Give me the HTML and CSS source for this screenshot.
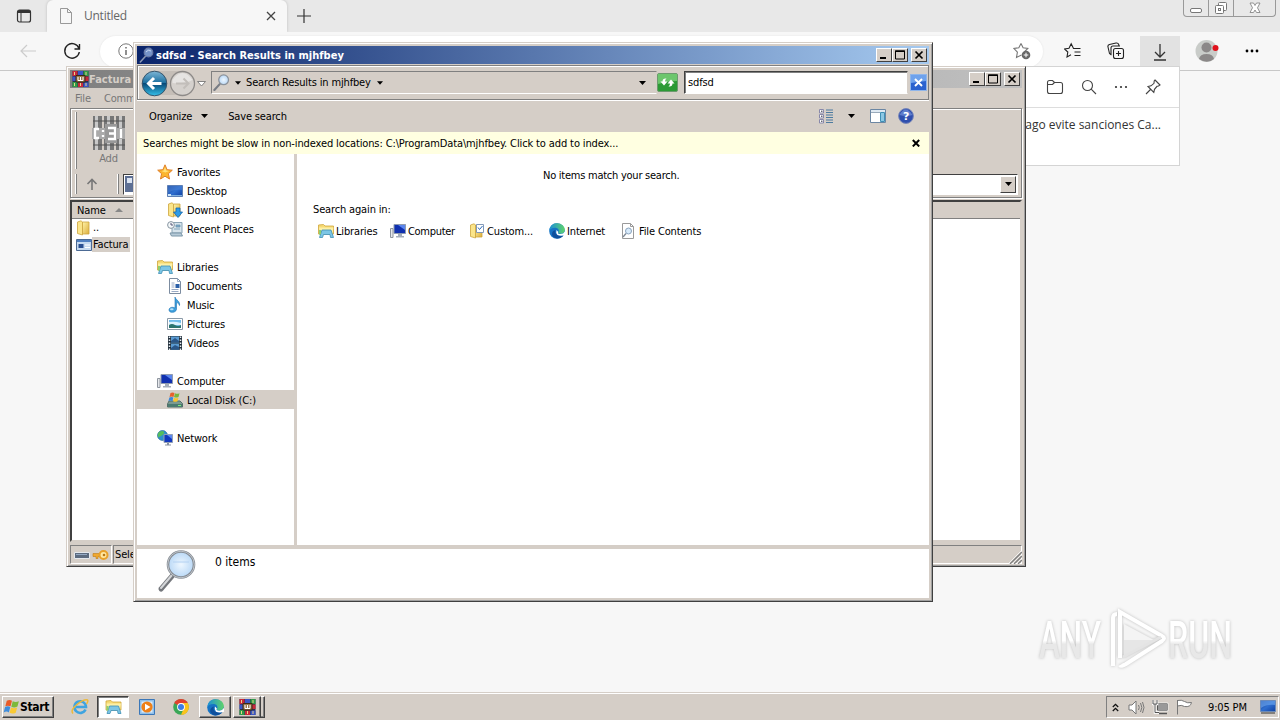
FILE: index.html
```html
<!DOCTYPE html>
<html lang="en">
<head>
  <meta charset="UTF-8">
  <title>Search Results</title>
  <link rel="stylesheet" href="styles.css">
</head>
<body>

<!-- shared icons -->
<svg class="sprite" xmlns="http://www.w3.org/2000/svg">
  <defs>
    <linearGradient id="gFolder" x1="0" y1="0" x2="1" y2="1"><stop offset="0" stop-color="#fff3a8"/><stop offset="1" stop-color="#dcae3c"/></linearGradient>
    <linearGradient id="gScreen" x1="0" y1="0" x2="1" y2="1"><stop offset="0" stop-color="#173a8c"/><stop offset=".5" stop-color="#2f6fd0"/><stop offset="1" stop-color="#0f3fa0"/></linearGradient>
    <linearGradient id="gBlue" x1="0" y1="0" x2="0" y2="1"><stop offset="0" stop-color="#7db6d6"/><stop offset=".48" stop-color="#1b6f9f"/><stop offset=".5" stop-color="#084a78"/><stop offset="1" stop-color="#35c0ea"/></linearGradient>
    <linearGradient id="gEdge" x1="0" y1="0" x2="1" y2="0"><stop offset="0" stop-color="#1b8fd8"/><stop offset="1" stop-color="#5ed36a"/></linearGradient>
    <radialGradient id="gLens"><stop offset="0" stop-color="#eef7ff"/><stop offset="1" stop-color="#b9d8f6"/></radialGradient>
    <symbol id="star" viewBox="0 0 16 16"><path d="M8 .8l2.100 4.900 5.200.5-3.900 3.500 1.100 5.300L8 12.200 3.500 15l1.100-5.300L.7 6.200l5.200-.5z" fill="#fbb52f" stroke="#e0802a"/><path d="M8 3l1.300 3.500 3 .5-4 1.500-4-1.500 2.400-.6z" fill="#ffe07a"/></symbol>
    <symbol id="desktop" viewBox="0 0 16 16"><path d="M.5 2.500h15v11H.5z" fill="url(#gScreen)" stroke="#5d7fb4"/><path d="M1 3h14v4Q7 6 1 10z" fill="#4b83d6" opacity=".55"/><path d="M1 12h14v1H1z" fill="#7fb0e0"/><path d="M1 11h3v2H1z" fill="#cfe6fa"/></symbol>
    <symbol id="folder" viewBox="0 0 16 16"><path d="M1.500 2L5 .8l1.500 1.200v13L1.500 13.500z" fill="#fbe58a" stroke="#cda43e" stroke-width=".8"/><path d="M6.500 2H13v12H6.500z" fill="url(#gFolder)" stroke="#cda43e" stroke-width=".8"/></symbol>
    <symbol id="downloads" viewBox="0 0 16 16"><use href="#folder"/><path d="M9 6h4v4h2.500L11 15.500 6.500 10H9z" fill="#2e9be6" stroke="#1767ad" stroke-width=".8"/></symbol>
    <symbol id="recent" viewBox="0 0 16 16"><path d="M5 1.500h10V12H5z" fill="#d7e4ec" stroke="#8aa4b5"/><path d="M3 12h11l1.500 3h-11z" fill="#b7cbd8" stroke="#7b96a8"/><path d="M9 4h4v2H9zM7 8h6" fill="#7ba8c8" stroke="#6d95b0" stroke-width=".8"/><circle cx="4" cy="4" r="3.400" fill="#f4f8fa" stroke="#8795a0"/><path d="M4 2v2h2" fill="none" stroke="#557"/></symbol>
    <symbol id="libraries" viewBox="0 0 16 16"><path d="M.5 2l5-.5L7 3h8.500v8H.5z" fill="#f6da74" stroke="#cfa63c" stroke-width=".8"/><path d="M1 4.500h14.500l-1 6H2z" fill="#fdf0a6"/><path d="M4 7h9l2.500 7.500h-3l-.5-3H5.500l-1 3h-3z" fill="#7cc6e6" stroke="#3f8fb5" stroke-width=".8"/><path d="M1 7v5l2-1V7z" fill="#8ecf70"/></symbol>
    <symbol id="documents" viewBox="0 0 16 16"><path d="M2.500.5h8l3 3v12h-11z" fill="#fff" stroke="#7c8ca0"/><path d="M10.500.5v3h3M4.500 5h3M4.500 7h3M4.500 9h3M4.500 11.500h7M4.500 13.500h7" fill="none" stroke="#7d93b5" stroke-width=".8"/><path d="M8.500 6h4v4h-4z" fill="#2b5fa8"/></symbol>
    <symbol id="music" viewBox="0 0 16 16"><path d="M8 0c.5 3 5.500 4 4.500 8.500C12 6 9.800 5.600 9.500 5.600V12c0 4-7.500 4.500-7.500 1 0-2.600 3.500-3.500 6-2z" fill="#3e9fdc" stroke="#1c74b5" stroke-width=".6"/><ellipse cx="4.800" cy="12.200" rx="1.800" ry="1" fill="#b6e1fa"/></symbol>
    <symbol id="pictures" viewBox="0 0 16 16"><path d="M.5 2.500h15v11H.5z" fill="#fff" stroke="#8b9aa8"/><path d="M2 4h12v8H2z" fill="#6fbcec"/><path d="M2 6q6-1 12 1v2H2z" fill="#d9f1ff"/><path d="M2 9q3-2 6 0t6 0v3H2z" fill="#2b746f"/></symbol>
    <symbol id="videos" viewBox="0 0 16 16"><path d="M1 1h14v14H1z" fill="#23303c"/><path d="M4 1.500h8v6H4zM4 8.500h8v6H4z" fill="#5b9bd2"/><path d="M4 6l4-3 4 3v1.500H4zM4 13l4-3 4 2v2.500H4z" fill="#2a5688"/><path d="M2.500 1.500v14M13.500 1.500v14" stroke="#e8eef4" stroke-width="1.500" stroke-dasharray="1.500 1.500"/></symbol>
    <symbol id="computer" viewBox="0 0 16 16"><path d="M4 1.500h11.500v9H4z" fill="#1030b0" stroke="#8f9bb0"/><path d="M8 2l7 0v5z" fill="#5b86ee"/><path d="M8 11h4v2H8zM6 13h8v1.500H6z" fill="#a4adba"/><path d="M.5 5.500h2.500v9H.5z" fill="#e6e8ec" stroke="#8e959e"/></symbol>
    <symbol id="disk" viewBox="0 0 16 16"><path d="M2 9h11l2.500 2.500v3.500h-15v-3z" fill="#7b9a90" stroke="#536f69"/><path d="M1 12h14v3H1z" fill="#4b7a70"/><path d="M11 13.500h3" stroke="#7df07d"/><path d="M3.500 1q2-1.200 4 0L6.500 5q-2-1-4 0z" fill="#e8602c"/><path d="M8 1.300q2 1 4.500 0L11.500 5q-2.500 1-4.500 0z" fill="#79b63c"/><path d="M2.400 5.500q2-1 4 0l-1 3.500q-2-1-4 0z" fill="#3b87d8"/><path d="M7 5.700q2 1 4.500 0l-1 3.500q-2.500 1-4.500 0z" fill="#f8c52e"/></symbol>
    <symbol id="network" viewBox="0 0 16 16"><circle cx="5.500" cy="5.500" r="5" fill="#2f8fd0" stroke="#1d5f96" stroke-width=".6"/><path d="M2 2q4-2 5 0T4 6 2 8Q-.5 5 2 2zM7 6l3-2v4z" fill="#55bd5d"/><path d="M7 4.500h8.500v8H7z" fill="#1238c0" stroke="#93a0b5"/><path d="M10 5h5v4z" fill="#5c88f0"/><path d="M10 13h2v1.500h2v1H8v-1h2z" fill="#8892a0"/></symbol>
    <symbol id="custom" viewBox="0 0 16 16"><use href="#folder"/><path d="M7.500 1.500h7v8h-7z" fill="#fff" stroke="#8299b8"/><path d="M9 4.500l1.500 2L13.500 3" fill="none" stroke="#2a68b8"/></symbol>
    <symbol id="edge" viewBox="0 0 16 16"><circle cx="8" cy="8" r="7.800" fill="#1673c4"/><path d="M.3 7C1.200 2 4.500.2 8 .2c4.500 0 7.800 3 7.800 6.600 0 2.600-2 4-4.300 4-1.800 0-2.500-.8-2-1.700C10.500 7 9 4.800 6 4.800 3 4.800.8 6.300.3 8z" fill="url(#gEdge)"/><path d="M6.300 8c-.8 3.500 2.700 5.500 8.200 4.500-3 3.500-8.500 4-11 .5C2 10 4 7.500 6.500 7z" fill="#0e4f9c"/><path d="M9.300 9q-1.300 2 2.200 2 2.800 0 4.500-2.500v3.500Q12 13.500 8.500 12 6.500 10 7.500 7z" fill="#fff"/></symbol>
    <symbol id="filesearch" viewBox="0 0 16 16"><path d="M2.500.5h8l3 3v12h-11z" fill="#fff" stroke="#9a9a9a"/><path d="M10.500.5v3h3" fill="none" stroke="#9a9a9a"/><circle cx="8.500" cy="8" r="3" fill="#d8ebfb" stroke="#8aa3bd"/><path d="M6 10.500L3 14" stroke="#7c8794" stroke-width="1.300"/></symbol>
    <symbol id="lens" viewBox="0 0 16 16"><path d="M6.300 9.500L1.300 15" stroke="#777c84" stroke-width="2" stroke-linecap="round"/><circle cx="10" cy="5.500" r="4.600" fill="url(#gLens)" stroke="#8b929b" stroke-width="1.200"/></symbol>
    <symbol id="lensdark" viewBox="0 0 16 16"><path d="M6.300 9.500L1.300 15" stroke="#8f9bb5" stroke-width="1.500" stroke-linecap="round"/><circle cx="9.500" cy="5.500" r="4.300" fill="#7593c8" stroke="#6a7ba6" stroke-width="1.200"/><path d="M7 5q2-3 5-1" fill="none" stroke="#c5d6f2"/></symbol>
    <symbol id="winrar" viewBox="0 0 16 16"><path d="M0 0h16v16H0z" fill="#28304a"/><path d="M0 0h5v5H0zM5.500 11.500h5V16h-5z" fill="#c8283a"/><path d="M5.500 0h5v4h-5zM0 5.500h4V10H0zM11 11.500h5V16h-5z" fill="#3b55c4"/><path d="M11 0h5v5h-5zM0 11h5v5H0z" fill="#2f9a48"/><path d="M12 5.500h4V10h-4z" fill="#c8283a"/><path d="M3.500 4.500h9v6.500h-9z" fill="#9a7a50" stroke="#3b2a14"/><path d="M5.500 6v3.500h5V6M8 6v3.500" fill="none" stroke="#fff"/><path d="M2 1v3M13.500 1v3M2 12v3M8 12v3M13.500 12v3" stroke="#e6d58a" stroke-width="1"/></symbol>
    <symbol id="flagwin" viewBox="0 0 18 16"><path d="M4 1.500q3-1.800 5.500 0L8 7.300q-3-1.500-5.500 0z" fill="#ea5b28"/><path d="M10.300 2q3 1.600 6.500 0l-1.500 5.500q-3.500 1.800-6.500.2z" fill="#7db93a"/><path d="M2.200 8q3-1.500 5.500 0L6.200 13.700q-2.500-1.700-5.500 0z" fill="#3f8ddc"/><path d="M8.500 8.500q3 1.600 6.500 0L13.500 14q-3.500 1.800-6.500.2z" fill="#f9c934"/></symbol>
    <symbol id="down" viewBox="0 0 7 4"><path d="M0 0h7L3.500 4z"/></symbol>
    <symbol id="min" viewBox="0 0 12 10"><path d="M2 7h6v2H2z"/></symbol>
    <symbol id="max" viewBox="0 0 12 10"><path d="M1.500 1h9v8h-9z" fill="none" stroke="#000"/><path d="M1 .5h10v1.500H1z"/></symbol>
    <symbol id="close" viewBox="0 0 12 10"><path d="M2.500 1.500l7 7M9.500 1.500l-7 7" stroke="#000" stroke-width="1.700"/></symbol>
  </defs>
</svg>

<div class="screen">

  <!-- browser behind -->
  <div class="browser">
    <div class="tabstrip">
      <div class="tab-actions"><svg width="16" height="16" viewBox="0 0 16 16"><rect x="1.500" y="2" width="13" height="12" rx="2" fill="none" stroke="#333" stroke-width="1.200"/><path d="M1.500 5V4q0-2 2-2h9q2 0 2 2v1z" fill="#333"/><path d="M5 5v9" stroke="#333"/></svg></div>
      <div class="tab">
        <svg width="14" height="16" viewBox="0 0 14 16" fill="none" stroke="#999"><path d="M1.500.5h7l4 4v11h-11zM8.500.5v4h4"/></svg>
        <span class="tab-title">Untitled</span>
        <svg width="10" height="10" viewBox="0 0 10 10" stroke="#444" stroke-width="1.300"><path d="M1 1l8 8M9 1L1 9"/></svg>
      </div>
      <svg class="new-tab" width="16" height="16" viewBox="0 0 16 16" stroke="#333" stroke-width="1.200"><path d="M8 1v14M1 8h14"/></svg>
      <div class="caption">
        <span><svg width="14" height="16" viewBox="0 0 14 16" fill="#fff" stroke="#777"><rect x="1.500" y="8.500" width="11" height="4" rx="1.500"/></svg></span>
        <span><svg width="14" height="16" viewBox="0 0 14 16" fill="#fff" stroke="#777"><rect x="4.500" y="2.500" width="8" height="8" rx="1"/><rect x="1.500" y="5.500" width="8" height="8" rx="1"/><rect x="4.500" y="8.500" width="2" height="2"/></svg></span>
        <span class="wide"><svg width="14" height="16" viewBox="0 0 14 16" fill="#fff" stroke="#888" stroke-width=".9"><path d="M2 3h3.500L7 5.500 8.500 3H12L9.500 7.800 12 12.500H8.500L7 10l-1.500 2.500H2l2.500-4.700z"/></svg></span>
      </div>
    </div>
    <div class="toolbar">
      <svg class="back" width="18" height="16" viewBox="0 0 18 16" fill="none" stroke="#ccc" stroke-width="1.200"><path d="M8 2L2 8l6 6M2 8h15"/></svg>
      <svg class="reload" width="18" height="18" viewBox="0 0 18 18" fill="none" stroke="#222" stroke-width="1.400"><path d="M16 6.500A7.300 7.300 0 1 0 16.300 10M16.500 2v5h-5"/></svg>
      <div class="omnibox">
        <svg width="16" height="16" viewBox="0 0 16 16" fill="none" stroke="#777"><circle cx="8" cy="8" r="7.200"/><path d="M8 7v5M8 4v1.500" stroke="#555" stroke-width="1.300"/></svg>
        <svg width="18" height="18" viewBox="0 0 18 18"><path d="M8 1.500l2.100 4.300 4.700.7-3 3M8.500 13L3.500 15.500l.9-5.300L1 6.500l4.800-.7L8 1.500" fill="none" stroke="#777" stroke-width="1.100"/><circle cx="13" cy="13" r="4.300" fill="#666"/><path d="M13 10.700v4.600M10.700 13h4.600" stroke="#fff"/></svg>
      </div>
      <svg class="fav" width="18" height="18" viewBox="0 0 18 18" fill="none" stroke="#222" stroke-width="1.100"><path d="M11 6.500H9.500L7.200 1.800 5 6.200l-4.500.7L3.800 10 3 15l4-2.200M10 6.500h6.500M10.500 10h6M10.500 13.500h6"/></svg>
      <svg class="coll" width="18" height="18" viewBox="0 0 18 18" fill="none" stroke="#222" stroke-width="1.100"><rect x="6.500" y="6.500" width="10" height="10" rx="2"/><path d="M11.500 9v5M9 11.500h5M4.500 13L2.500 11.500 1 5q-.5-2 1.500-2.500L9 1q2-.4 2.700 1.500L12 4M4 12V6q0-2 2-2h7"/></svg>
      <div class="dl-button"><svg width="18" height="20" viewBox="0 0 18 20" fill="none" stroke="#333" stroke-width="1.300"><path d="M9 1v13M4 9l5 5 5-5M3 17h12"/></svg></div>
      <div class="avatar"><svg width="24" height="24" viewBox="0 0 24 24"><circle cx="11.500" cy="12" r="11" fill="#c9ccc9"/><circle cx="11.500" cy="8.500" r="5" fill="#8b8888"/><path d="M4 20q1-5 7.500-5t7.500 5q-7 5.500-15 0z" fill="#8b8888"/><circle cx="20.500" cy="9" r="3" fill="#e0121c"/></svg></div>
      <svg class="dots" width="14" height="4" viewBox="0 0 14 4"><circle cx="2" cy="2" r="1.400"/><circle cx="7" cy="2" r="1.400"/><circle cx="12" cy="2" r="1.400"/></svg>
    </div>
    <div class="page"></div>
  </div>

  <div class="downloads">
    <div class="downloads-head">
      <svg width="18" height="16" viewBox="0 0 18 16" fill="none" stroke="#444" stroke-width="1.100"><path d="M1.500 3.500q0-2 2-2h3l2 2h6q2 0 2 2v7q0 2-2 2h-11q-2 0-2-2zM1.500 5.500h5l2-2"/></svg>
      <svg width="16" height="16" viewBox="0 0 16 16" fill="none" stroke="#444" stroke-width="1.100"><circle cx="6.500" cy="6.500" r="5"/><path d="M10.200 10.200L15 15"/></svg>
      <svg width="14" height="4" viewBox="0 0 14 4" fill="#333"><circle cx="2" cy="2" r="1.100"/><circle cx="7" cy="2" r="1.100"/><circle cx="12" cy="2" r="1.100"/></svg>
      <svg width="16" height="16" viewBox="0 0 16 16" fill="none" stroke="#444" stroke-width="1.100"><path d="M10 1l5 5-1.500 1-1.500.3-2.500 3-.7 3L3 7.500l3-.7 3-2.500L9.200 2zM5.500 10.500L1 15"/></svg>
    </div>
    <div class="downloads-item">pago evite sanciones Ca...</div>
  </div>

  <!-- watermark -->
  <svg class="watermark" width="230" height="76" viewBox="0 0 230 76">
    <defs><linearGradient id="gMark" x1="0" y1="0" x2="0" y2="1"><stop offset=".5" stop-color="#fff"/><stop offset=".56" stop-color="#e8e8e8"/></linearGradient></defs>
    <text x="8" y="54" textLength="62" lengthAdjust="spacingAndGlyphs">ANY</text>
    <path d="M93 20l30 16H93z" fill="#f4f4f4"/>
    <path d="M93 36h30l-30 17z" fill="#e6e6e6"/>
    <path d="M82 62V14q0-4 4-4M89 54V8l42 24q4 2 0 5L95 60q-5 3-6 1" fill="none" stroke="#fff" stroke-width="4"/>
    <path d="M92 53l38-20" stroke="#e4e4e4" stroke-width="3"/>
    <text x="137" y="54" textLength="64" lengthAdjust="spacingAndGlyphs">RUN</text>
  </svg>

  <!-- archive window -->
  <div class="window rar">
    <div class="titlebar inactive">
      <svg width="17" height="16"><use href="#winrar"/></svg>
      <span class="title">Factura</span>
      <div class="buttons"><i><svg width="12" height="10"><use href="#min"/></svg></i><i><svg width="12" height="10"><use href="#max"/></svg></i><i class="x"><svg width="12" height="10"><use href="#close"/></svg></i></div>
    </div>
    <div class="menu"><span>File</span><span>Commands</span></div>
    <div class="rar-tools">
      <div class="rar-big">
        <div class="grip"></div>
        <div class="rar-add">
          <svg width="36" height="36" viewBox="0 0 36 36"><path d="M2 1h9v34H2zM13 1h10v34H13zM25 1h9v34h-9z" fill="#777"/><path d="M4 1h3v34H4zM16 1h3v34h-3zM28 1h3v34h-3z" fill="#c9c9c9"/><path d="M2 6h32M2 30h32" stroke="#555" stroke-width="1.200"/><path d="M1 13h33v11H1z" fill="#aaa"/><path d="M14 9h12v19H14z" fill="#999"/><path d="M8 14H4v9h4M17 13h7v11h-7M18 18.500h6M12 15v2M12 20v2M30 14v9" fill="none" stroke="#fff" stroke-width="2.300"/></svg>
          <span>Add</span>
        </div>
      </div>
      <div class="rar-address">
        <div class="grip"></div>
        <svg width="12" height="12" viewBox="0 0 12 12" fill="none" stroke="#777" stroke-width="1.600"><path d="M6 12V2M1.500 6L6 1.500 10.500 6"/></svg>
        <div class="grip second"></div>
        <div class="rar-combo">
          <svg width="16" height="16" viewBox="0 0 16 16"><path d="M0 0h16v16H0z" fill="#5d6f94"/><path d="M2 2h5v5H2zM9 8h5v6H9z" fill="#dbe4f2"/></svg>
          <i><svg width="7" height="4"><use href="#down"/></svg></i>
        </div>
      </div>
    </div>
    <div class="rar-list">
      <div class="rar-head">Name <svg width="8" height="4" viewBox="0 0 8 4"><path d="M0 4l4-4 4 4z" fill="#888"/></svg></div>
      <div class="rar-row"><svg width="16" height="16"><use href="#folder"/></svg><span>..</span></div>
      <div class="rar-row selected"><svg width="16" height="14" viewBox="0 0 16 14"><path d="M.5 1.500h15v11H.5z" fill="#c5d9ef" stroke="#4c6a94"/><path d="M1 2h14v2H1z" fill="#4f7fc0"/><path d="M2.500 6h5v4h-5z" fill="#2a4f90"/><path d="M9 7h5M9 9.500h5" stroke="#fff"/></svg><span>Factura</span></div>
    </div>
    <div class="rar-status">
      <div class="cell icons">
        <svg width="16" height="8" viewBox="0 0 16 8"><path d="M.5 1.500h15v6H.5z" fill="#5c6b80" stroke="#e4e8ee"/><path d="M2 3.500h11" stroke="#94a9c4"/></svg>
        <svg width="17" height="12" viewBox="0 0 17 12"><path d="M1 4.500h9v3H6v2H4v-2H1z" fill="#f0a830" stroke="#c07c18" stroke-width=".6"/><circle cx="11.500" cy="6" r="4" fill="#ffe7a0" stroke="#e8a12a" stroke-width="2"/><circle cx="12" cy="6" r="1.300" fill="#b87818"/></svg>
      </div>
      <div class="cell grow">Selected</div>
      <svg class="resize" width="13" height="13" viewBox="0 0 13 13" stroke="#808080" stroke-width="1.300"><path d="M1 13L13 1M5 13l8-8M9 13l4-4"/><path d="M0 12L12 0M4 12l8-8M8 12l4-4" stroke="#fff" stroke-width=".7"/></svg>
    </div>
  </div>

  <!-- explorer window -->
  <div class="window explorer">
    <div class="titlebar">
      <svg width="16" height="16"><use href="#lensdark"/></svg>
      <span class="title">sdfsd - Search Results in mjhfbey</span>
      <div class="buttons"><i><svg width="12" height="10"><use href="#min"/></svg></i><i><svg width="12" height="10"><use href="#max"/></svg></i><i class="x"><svg width="12" height="10"><use href="#close"/></svg></i></div>
    </div>
    <div class="nav">
      <svg class="travel" width="67" height="30" viewBox="0 0 67 30">
        <path d="M12 3h32q8 10 0 24H12z" fill="#c5beb7"/>
        <circle cx="15.500" cy="15.500" r="12.300" fill="url(#gBlue)" stroke="#35536a"/>
        <path d="M22.500 15.500h-12M15 10l-5.500 5.500L15 21" fill="none" stroke="#fff" stroke-width="3"/>
        <circle cx="43.500" cy="15.500" r="12" fill="#d5d1cd" stroke="#8d8a88" stroke-width="1.300"/>
        <path d="M33.500 12q10-14 20 0-8 4-20 3z" fill="#e6e4e2"/>
        <path d="M37 15.500h12M44.500 10.500l5 5-5 5" fill="none" stroke="#c2beba" stroke-width="2"/>
        <path d="M58.500 13.500h8L62.500 18z" fill="#fff" stroke="#777" stroke-width=".9"/>
      </svg>
      <div class="address">
        <svg width="17" height="17"><use href="#lens"/></svg>
        <svg class="a1" width="6" height="4"><use href="#down"/></svg>
        <span>Search Results in mjhfbey</span>
        <svg class="a2" width="6" height="4"><use href="#down"/></svg>
        <svg class="a3" width="7" height="4"><use href="#down"/></svg>
      </div>
      <svg class="refresh" width="21" height="19" viewBox="0 0 21 19"><rect x=".5" y=".5" width="20" height="18" rx="1.500" fill="#2c9a35" stroke="#6c9a6e"/><path d="M1 1h19v7Q10 8 1 11z" fill="#6cc66c"/><path d="M3.500 8.500l3.500 4 3.500-4H8q0-2 1.500-3-4-.5-4 3zM17.500 10.500l-3.500-4-3.500 4H13q0 2-1.500 3 4 .5 4-3z" fill="#fff"/></svg>
      <div class="search"><span>sdfsd</span></div>
      <svg class="clear" width="17" height="17" viewBox="0 0 17 17"><path d="M.5.5h16v16H.5z" fill="#2b62cf" stroke="#8fb5ea"/><path d="M1 1h15v6L1 9z" fill="#6fa2ec"/><path d="M5 5l7 7M12 5l-7 7" stroke="#fff" stroke-width="1.900"/></svg>
    </div>
    <div class="commands">
      <span class="organize">Organize</span><svg class="c1" width="7" height="4"><use href="#down"/></svg>
      <span class="save">Save search</span>
      <svg class="view" width="14" height="15" viewBox="0 0 14 15"><path d="M.5.5h4v3.500h-4zM.5 5.500h4V9h-4zM.5 10.500h4V14h-4z" fill="#fff" stroke="#88a"/><path d="M7 1h7M7 3.500h7M7 6h7M7 8.500h7M7 11h7M7 13.500h7" stroke="#4d7ba0"/><path d="M2 2.200h1.500M2 7.200h1.500M2 12.200h1.500" stroke="#223"/></svg>
      <svg class="c2" width="7" height="4"><use href="#down"/></svg>
      <svg class="pane" width="16" height="14" viewBox="0 0 16 14"><path d="M.5.5h15v13H.5z" fill="#fff" stroke="#6b86a3"/><path d="M1 1h14v2.500H1z" fill="#dfe9f2"/><path d="M10.500 3.500h4v9h-4z" fill="#8cc7e4" stroke="#3f8fb5"/><path d="M1 3.500h9" stroke="#9ab"/></svg>
      <svg class="help" width="16" height="16" viewBox="0 0 16 16"><circle cx="8" cy="8" r="7.400" fill="#2f4fae" stroke="#7786b8"/><path d="M1.500 7q6-11 13 0-6 2-13 0z" fill="#5f7dcc"/><text x="8" y="12" class="q">?</text></svg>
    </div>
    <div class="infobar">
      <span>Searches might be slow in non-indexed locations: C:\ProgramData\mjhfbey. Click to add to index...</span>
      <svg width="8" height="8" viewBox="0 0 8 8" stroke="#000" stroke-width="2"><path d="M.8 1l6.400 6.400M7.200 1L.8 7.400"/></svg>
    </div>
    <div class="body">
      <div class="side">
        <div class="node top"><svg width="16" height="16"><use href="#star"/></svg><span>Favorites</span></div>
        <div class="node"><svg width="16" height="16"><use href="#desktop"/></svg><span>Desktop</span></div>
        <div class="node"><svg width="16" height="16"><use href="#downloads"/></svg><span>Downloads</span></div>
        <div class="node"><svg width="16" height="16"><use href="#recent"/></svg><span>Recent Places</span></div>
        <div class="node top gap"><svg width="16" height="16"><use href="#libraries"/></svg><span>Libraries</span></div>
        <div class="node"><svg width="16" height="16"><use href="#documents"/></svg><span>Documents</span></div>
        <div class="node"><svg width="16" height="16"><use href="#music"/></svg><span>Music</span></div>
        <div class="node"><svg width="16" height="16"><use href="#pictures"/></svg><span>Pictures</span></div>
        <div class="node"><svg width="16" height="16"><use href="#videos"/></svg><span>Videos</span></div>
        <div class="node top gap"><svg width="16" height="16"><use href="#computer"/></svg><span>Computer</span></div>
        <div class="node active"><svg width="16" height="16"><use href="#disk"/></svg><span>Local Disk (C:)</span></div>
        <div class="node top gap"><svg width="16" height="16"><use href="#network"/></svg><span>Network</span></div>
      </div>
      <div class="results">
        <div class="empty"><span>No items match your search.</span></div>
        <div class="again">Search again in:</div>
        <div class="places">
          <div class="place p1"><svg width="16" height="16"><use href="#libraries"/></svg><span>Libraries</span></div>
          <div class="place p2"><svg width="16" height="16"><use href="#computer"/></svg><span>Computer</span></div>
          <div class="place p3"><svg width="16" height="16"><use href="#custom"/></svg><span>Custom...</span></div>
          <div class="place p4"><svg width="16" height="16"><use href="#edge"/></svg><span>Internet</span></div>
          <div class="place p5"><svg width="16" height="16"><use href="#filesearch"/></svg><span>File Contents</span></div>
        </div>
      </div>
    </div>
    <div class="details">
      <svg width="40" height="46" viewBox="0 0 40 46"><path d="M16 26L4 40" stroke="#74777c" stroke-width="5" stroke-linecap="round"/><path d="M15 26L4 39" stroke="#d4d6d9" stroke-width="2" stroke-linecap="round"/><circle cx="24" cy="15.500" r="13" fill="url(#gLens)" stroke="#858b92" stroke-width="2.600"/><circle cx="24" cy="15.500" r="13.300" fill="none" stroke="#cdd2d8" stroke-width=".8"/><path d="M16 13h16" fill="none" stroke="#b4d2f2"/></svg>
      <span>0 items</span>
    </div>
  </div>

  <!-- taskbar -->
  <div class="taskbar">
    <div class="start"><svg width="17" height="16"><use href="#flagwin"/></svg><span>Start</span></div>
    <svg class="ie" width="18" height="18" viewBox="0 0 18 18" fill="none"><path d="M14.500 11.500A5.800 5.800 0 1 1 15 9H5" stroke="#3fa4e0" stroke-width="2.600"/><path d="M2 15.500Q-1 12 6 6.500T16.500 2q1 1.500-1 4" stroke="#edb93a" stroke-width="1.500"/></svg>
    <div class="task pressed"><svg width="17" height="16"><use href="#libraries"/></svg></div>
    <svg class="wmp" width="16" height="16" viewBox="0 0 16 16"><path d="M.5.5h15v15H.5z" fill="#8fc0ea" stroke="#3b77b8"/><path d="M2.500 2.500h11v11h-11z" fill="#dcebf8"/><circle cx="8" cy="8" r="5.600" fill="#ee8018"/><path d="M6 4.800L11.500 8 6 11.200z" fill="#fff"/></svg>
    <svg class="chrome" width="16" height="16" viewBox="0 0 16 16"><circle cx="8" cy="8" r="7.800" fill="#3aa757"/><path d="M8 8L1.200 4.100A7.800 7.800 0 0 1 14.800 4.100z" fill="#e0412f"/><path d="M8 8V4.100h6.800A7.800 7.800 0 0 1 8 15.800L11 9z" fill="#fbc31c"/><circle cx="8" cy="8" r="3.900" fill="#fff"/><circle cx="8" cy="8" r="3" fill="#3c7de6"/></svg>
    <div class="task t2"><svg width="17" height="17"><use href="#edge"/></svg></div>
    <div class="task t3"><svg width="17" height="16"><use href="#winrar"/></svg></div>
    <div class="task stub"></div>
    <div class="tray">
      <svg class="chev" width="7" height="9" viewBox="0 0 7 9" fill="none" stroke="#111" stroke-width="1.300"><path d="M.8 4l2.700-2.700L6.200 4M.8 8l2.700-2.700L6.200 8"/></svg>
      <svg class="vol" width="17" height="15" viewBox="0 0 17 15" fill="#fff" stroke="#777"><path d="M1 5h3l4-4v13l-4-4H1z"/><path d="M10.500 5q1.500 2.500 0 5M12.500 3q2.700 4.500 0 9M14.500 2q3 5.500 0 11" fill="none"/></svg>
      <svg class="net" width="17" height="16" viewBox="0 0 17 16"><path d="M5.500 4.500h10v7h-10z" fill="#999" stroke="#555"/><path d="M4 4h12v8H4z" fill="none" stroke="#fff" stroke-width=".7"/><path d="M7 14.500h8" stroke="#555" stroke-width="1.500"/><path d="M1 1v4h4V1M3 5v8.500h4" fill="none" stroke="#fff" stroke-width="2.500"/><path d="M1 1v4h4V1M3 5v8.500h4" fill="none" stroke="#555"/></svg>
      <svg class="flag" width="17" height="16" viewBox="0 0 17 16" fill="#fff" stroke="#777"><path d="M1.500 1v14.500M1.500 1.500q4-1 7 1t7 1q-1 5-7 4-3-2-7-.5z"/></svg>
      <span>9:05 PM</span>
      <svg class="show" width="16" height="14" viewBox="0 0 16 14"><path d="M.5.5h15v11H.5z" fill="url(#gScreen)" stroke="#6b8ab8"/><path d="M1 1h14v4Q7 4 1 8z" fill="#65a0ea" opacity=".7"/><path d="M1 13h14" stroke="#333"/></svg>
    </div>
  </div>
</div>

</body>
</html>
```
FILE: styles.css
```css
* {
  box-sizing: border-box;
}

body {
  margin: 0;
  font-family: "DejaVu Sans Condensed", "DejaVu Sans", sans-serif;
  font-size: 11px;
  letter-spacing: -0.15px;
  color: #000;
  overflow: hidden;
}

svg {
  display: block;
  flex: none;
}

span {
  white-space: nowrap;
}

.sprite {
  position: absolute;
  width: 0;
  height: 0;
}

.screen {
  position: relative;
  width: 1280px;
  height: 720px;
  overflow: hidden;
  display: flex;
  flex-direction: column;
  background: #f7f7f7;
}

/* browser */
.browser {
  flex: 1;
  display: flex;
  flex-direction: column;
}

.tabstrip {
  height: 32px;
  background: #e8e8e8;
  display: flex;
  align-items: center;
}

.tab-actions {
  width: 47px;
  padding-left: 16px;
}

.tab {
  width: 240px;
  height: 32px;
  padding: 0 11px 0 12px;
  display: flex;
  align-items: center;
  background: #f7f7f7;
  border-radius: 6px 6px 0 0;
  box-shadow: 0 0 3px #bbb;
}

.tab-title {
  flex: 1;
  margin-left: 11px;
  padding-bottom: 1px;
  font: 12px "Open Sans", sans-serif;
  letter-spacing: -0.25px;
  color: #666;
}

.new-tab {
  margin-left: 9px;
}

.caption {
  display: flex;
  align-self: flex-start;
  height: 17px;
  margin: 0 4px 0 auto;
  border: 1px solid #999;
  border-top: 0;
  border-radius: 0 0 4px 4px;
}

.caption span {
  width: 25px;
  display: flex;
  justify-content: center;
  border-right: 1px solid #999;
}

.caption .wide {
  width: 41px;
  border-right: 0;
}

.toolbar {
  height: 39px;
  display: flex;
  align-items: center;
  background: #f7f7f7;
  border-bottom: 1px solid #c8c8c8;
}

.back {
  margin-left: 19px;
}

.reload {
  margin-left: 26px;
}

.omnibox {
  width: 943px;
  height: 31px;
  margin-left: 19px;
  padding: 0 12px 0 18px;
  display: flex;
  align-items: center;
  justify-content: space-between;
  background: #fff;
  border-radius: 16px;
  box-shadow: 0 0 2px #e0e0e0;
}

.fav {
  margin-left: 21px;
}

.coll {
  margin-left: 25px;
}

.dl-button {
  width: 40px;
  height: 34px;
  margin-left: 15px;
  align-self: flex-end;
  display: flex;
  align-items: center;
  justify-content: center;
  background: #e2e2e2;
}

.avatar {
  margin-left: 15px;
}

.dots {
  margin-left: 26px;
}

.page {
  flex: 1;
  background: #f7f7f7;
}

.downloads {
  position: absolute;
  left: 820px;
  top: 66px;
  width: 360px;
  height: 100px;
  background: #fff;
  border: 1px solid #d4d4d4;
}

.downloads-head {
  height: 41px;
  padding-right: 18px;
  display: flex;
  align-items: center;
  justify-content: flex-end;
  gap: 17px;
  border-bottom: 1px solid #ddd;
}

.downloads-item {
  padding: 8px 18px 0 0;
  text-align: right;
  font: 12px "Open Sans", sans-serif;
  letter-spacing: 0;
  color: #333;
}

.watermark {
  position: absolute;
  left: 1031px;
  top: 604px;
  filter: drop-shadow(0 0 1.500px #bdbdbd);
}

.watermark text {
  font: 500 52px Roboto, sans-serif;
  letter-spacing: 0;
  fill: url(#gMark);
}

/* classic windows */
.window {
  position: absolute;
  display: flex;
  flex-direction: column;
  padding: 2px;
  background: #d5cec7;
  border: 1px solid;
  border-color: #d5cec7 #404040 #404040 #d5cec7;
  box-shadow: inset 1px 1px #fff, inset -1px -1px #a0a0a0;
}

.titlebar {
  height: 18px;
  margin: 1px 1px 0;
  padding: 0 2px 0 2px;
  display: flex;
  align-items: center;
  background: linear-gradient(to right, #0a246a, #a6caf0);
  color: #fff;
  font-weight: bold;
  letter-spacing: 0.03px;
}

.titlebar .title {
  flex: 1;
}

.titlebar.inactive {
  background: linear-gradient(to right, #808080, #c0c0c0);
  color: #d5cec7;
}

.buttons {
  display: flex;
}

.buttons i {
  width: 16px;
  height: 14px;
  display: flex;
  align-items: center;
  justify-content: center;
  background: #d5cec7;
  border: 1px solid;
  border-color: #fff #404040 #404040 #fff;
}

.buttons .x {
  margin-left: 3px;
}

.rar {
  left: 66px;
  top: 66px;
  width: 960px;
  height: 501px;
}

.menu {
  height: 20px;
  padding: 0 6px;
  display: flex;
  align-items: center;
  gap: 13px;
  color: #777;
}

.rar-tools {
  height: 90px;
  margin: 0 1px;
  border: 1px solid #808080;
  box-shadow: inset 1px 1px #fff, 1px 1px #fff;
}

.rar-big {
  height: 63px;
  padding: 3px 4px;
  display: flex;
}

.grip {
  width: 2px;
  border-left: 1px solid #fff;
  border-right: 1px solid #808080;
}

.rar-add {
  width: 37px;
  margin-left: 13px;
  padding-top: 3px;
  display: flex;
  flex-direction: column;
  align-items: center;
  gap: 1px;
  color: #777;
}

.rar-address {
  height: 24px;
  padding: 0 3px 0 4px;
  display: flex;
  align-items: center;
}

.rar-address .grip {
  height: 20px;
}

.rar-address > svg {
  margin-left: 9px;
}

.rar-address .second {
  margin-left: 19px;
}

.rar-combo {
  flex: 1;
  height: 21px;
  margin-left: 4px;
  padding: 1px;
  display: flex;
  align-items: center;
  justify-content: space-between;
  background: #fff;
  border: 1px solid;
  border-color: #404040 #fff #fff #404040;
}

.rar-combo i {
  width: 16px;
  height: 17px;
  display: flex;
  align-items: center;
  justify-content: center;
  background: #d5cec7;
  border: 1px solid;
  border-color: #fff #404040 #404040 #fff;
}

.rar-list {
  flex: 1;
  margin: 2px 1px 3px;
  background: #fff;
  border: 2px solid;
  border-color: #404040 #d5cec7 #d5cec7 #404040;
}

.rar-head {
  height: 17px;
  padding-left: 5px;
  display: flex;
  align-items: center;
  gap: 9px;
  background: #d5cec7;
  border-bottom: 1px solid #808080;
}

.rar-row {
  height: 17px;
  padding-left: 4px;
  display: flex;
  align-items: center;
}

.rar-row span {
  padding: 1px 2px 1px 1px;
}

.rar-row.selected span {
  background: #d5cec7;
}

.rar-status {
  height: 19px;
  margin: 0 1px;
  display: flex;
  gap: 1px;
}

.cell {
  display: flex;
  align-items: center;
  border: 1px solid;
  border-color: #808080 #fff #fff #808080;
}

.icons {
  width: 42px;
  gap: 2px;
  padding-left: 3px;
}

.grow {
  flex: 1;
  padding-left: 1px;
}

.resize {
  align-self: flex-end;
  margin-left: -14px;
}

/* explorer */
.explorer {
  left: 133px;
  top: 42px;
  width: 800px;
  height: 560px;
}

.explorer .title {
  margin-left: 1px;
}

.nav {
  height: 35px;
  margin: 1px 1px 0;
  display: flex;
  align-items: center;
  border: 1px solid #808080;
  box-shadow: inset 1px 1px #fff, 0 1px #fff;
}

.travel {
  margin-left: 1px;
}

.address {
  width: 446px;
  height: 23px;
  margin-left: 5px;
  padding-left: 1px;
  display: flex;
  align-items: center;
  border: 1px solid;
  border-color: #808080 #d5cec7 #fff #808080;
}

.a1 {
  margin: 0 5px 0 5px;
}

.a2 {
  margin-left: 6px;
}

.a3 {
  margin: 0 10px 0 auto;
}

.search {
  width: 224px;
  height: 23px;
  margin-left: 6px;
  padding-left: 3px;
  display: flex;
  align-items: center;
  background: #fff;
  border: 1px solid;
  border-color: #404040 #d5cec7 #fff #404040;
  box-shadow: inset 1px 1px #808080;
}

.clear {
  margin-left: 2px;
}

.commands {
  height: 32px;
  padding: 0 15px 0 13px;
  display: flex;
  align-items: center;
}

.c1 {
  margin: 0 20px 0 9px;
}

.view {
  margin-left: auto;
}

.c2 {
  margin: 0 15px;
}

.help {
  margin: 0 1px 0 12px;
}

.q {
  font: bold 11px "DejaVu Sans", sans-serif;
  text-anchor: middle;
  fill: #fff;
}

.infobar {
  height: 22px;
  margin: 0 1px;
  padding: 0 9px 0 6px;
  display: flex;
  align-items: center;
  justify-content: space-between;
  background: #ffffe1;
  letter-spacing: -0.12px;
}

.body {
  flex: 1;
  margin: 0 1px;
  display: flex;
  background: #fff;
}

.side {
  width: 160px;
  padding-top: 8px;
  border-right: 3px solid #d5cec7;
}

.node {
  height: 19px;
  padding-left: 30px;
  display: flex;
  align-items: center;
  gap: 4px;
}

.node span {
  padding-top: 2px;
}

.node.top {
  padding-left: 20px;
}

.node.gap {
  margin-top: 19px;
}

.node.active {
  background: #d5cec7;
}

.results {
  flex: 1;
  padding: 13px 3px 0 16px;
}

.empty {
  height: 16px;
  padding-left: 230px;
  display: flex;
  align-items: center;
  letter-spacing: -0.25px;
}

.again {
  height: 16px;
  margin-top: 19px;
  line-height: 16px;
}

.places {
  margin: 5px 0 0 5px;
  display: flex;
}

.place {
  height: 16px;
  display: flex;
  align-items: center;
  gap: 2px;
}

.p1 {
  width: 72px;
}

.p2 {
  width: 79px;
  letter-spacing: -0.3px;
}

.p3 {
  width: 80px;
}

.p4 {
  width: 71px;
}

.p5 {
  gap: 3px;
}

.details {
  height: 53px;
  margin: 0 1px 1px;
  padding: 0 0 0 20px;
  display: flex;
  align-items: flex-start;
  background: #fff;
  border-top: 4px solid #d5cec7;
}

.details span {
  margin: 6px 0 0 18px;
  font-size: 12px;
  letter-spacing: 0;
}

/* taskbar */
.taskbar {
  height: 28px;
  padding: 1px 1px 0 2px;
  display: flex;
  align-items: center;
  background: #d5cec7;
  border-top: 1px solid #d5cec7;
  box-shadow: inset 0 1px #fff;
}

.start,
.task {
  height: 22px;
  display: flex;
  align-items: center;
  border: 1px solid;
  border-color: #fff #404040 #404040 #fff;
  box-shadow: inset -1px -1px #808080;
}

.start {
  width: 52px;
  font-size: 12px;
  font-weight: bold;
  letter-spacing: -0.3px;
}

.ie {
  margin: 0 8px 0 17px;
}

.task {
  width: 32px;
  justify-content: center;
}

.pressed {
  background: #fff;
  border-color: #404040 #fff #fff #404040;
  box-shadow: inset 1px 1px #808080;
}

.wmp {
  margin-left: 10px;
}

.chrome {
  margin: 0 10px 0 18px;
}

.t2 {
  margin-right: 2px;
}

.t3 {
  width: 28px;
}

.stub {
  width: 4px;
  border-left: 0;
}

.tray {
  width: 173px;
  height: 22px;
  margin-left: auto;
  padding: 0 2px 0 5px;
  display: flex;
  align-items: center;
  border: 1px solid;
  border-color: #808080 #fff #fff #808080;
}

.vol {
  margin-left: 9px;
}

.net {
  margin-left: 7px;
}

.flag {
  margin-left: 7px;
}

.tray span {
  margin-left: 15px;
}

.show {
  margin-left: auto;
}
```
